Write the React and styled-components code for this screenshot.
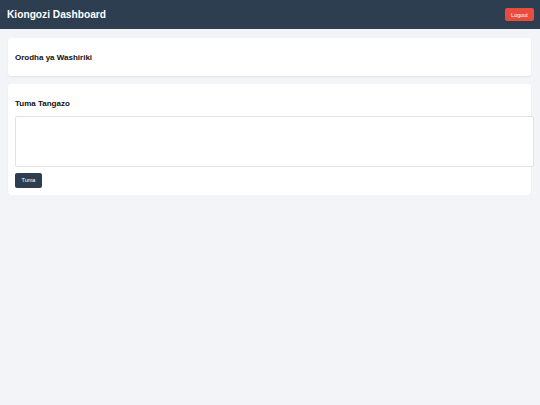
import { useState } from 'react';
import { styled, createGlobalStyle } from 'styled-components';

//#region Styled Components:
const GlobalStyle = createGlobalStyle`
  html, body {
    margin: 0;
    padding: 0;
    background: #f3f4f7;
    font-family: "Liberation Sans", Arial, sans-serif;
  }
`;

const Header = styled.header`
  height: 29px;
  background: #2c3e50;
  display: flex;
  align-items: center;
  justify-content: space-between;
  padding: 0 6px 0 7px;
`;

const Title = styled.h1`
  margin: 0;
  color: #fff;
  font-size: 10.2px;
  font-weight: bold;
`;

const Button = styled.button`
  display: block;
  border: none;
  border-radius: 2px;
  color: #fff;
  font-family: inherit;
  font-size: 5.5px;
  cursor: pointer;
  padding: 0;
  width: ${(p) => p.$width}px;
  height: ${(p) => p.$height}px;
  background: ${(p) => (p.$variant === 'danger' ? '#e74c3c' : '#2c3e50')};
`;

const Main = styled.main`
  display: flex;
  flex-direction: column;
  gap: 8px;
  padding: 9px 9px 0 8px;
`;

const Card = styled.section`
  background: #fff;
  border-radius: 3px;
  box-shadow: 0 1px 2px rgba(0, 0, 0, 0.07);
  padding: 7px;
`;

const CardTitle = styled.h3`
  margin: 6.5px 0;
  font-size: 8px;
  line-height: 11px;
  font-weight: bold;
  color: #111;
`;

const TextArea = styled.textarea`
  display: block;
  box-sizing: content-box;
  width: 100%;
  height: 41px;
  margin: 7px 0 6px;
  padding: 4px;
  border: 1px solid #e2e2e2;
  border-radius: 2px;
  resize: none;
  font-family: inherit;
`;
//#endregion

export default function App() {
  const [message, setMessage] = useState('');

  return (
    <>
      <GlobalStyle />
      <Header>
        <Title>Kiongozi Dashboard</Title>
        <Button $variant="danger" $width={29} $height={13}>Logout</Button>
      </Header>
      <Main>
        <Card>
          <CardTitle>Orodha ya Washiriki</CardTitle>
        </Card>
        <Card>
          <CardTitle>Tuma Tangazo</CardTitle>
          <TextArea value={message} onChange={(e) => setMessage(e.target.value)} />
          <Button $width={27} $height={15}>Tuma</Button>
        </Card>
      </Main>
    </>
  );
}
